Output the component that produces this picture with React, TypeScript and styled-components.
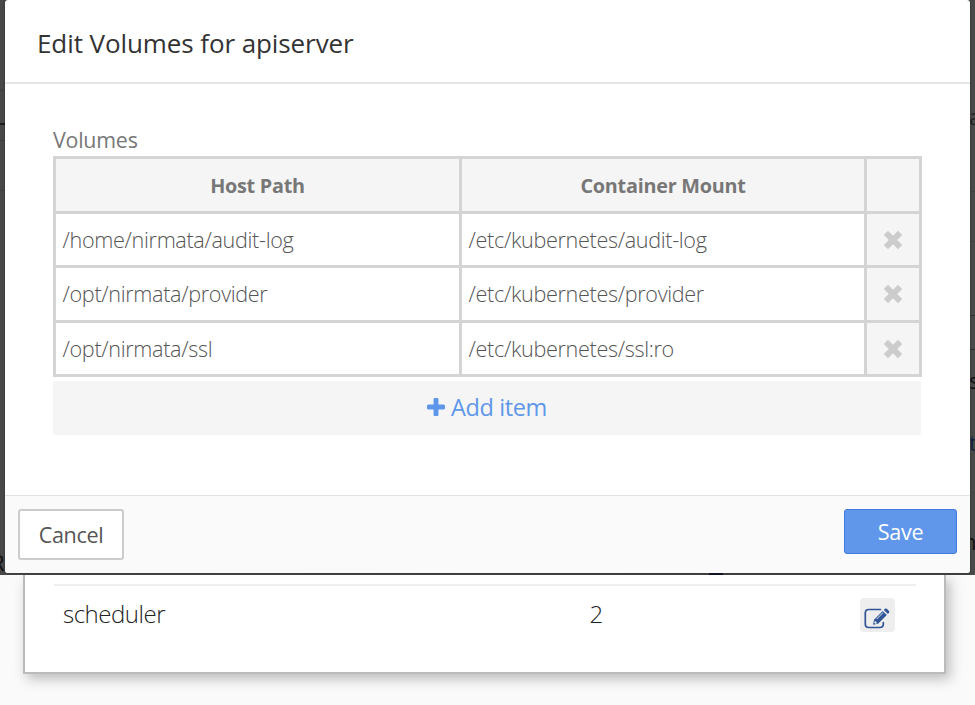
import React from "react";
import styled, { createGlobalStyle } from "styled-components";

const GlobalStyle = createGlobalStyle`
  *, *::before, *::after { box-sizing: border-box; }
  body {
    margin: 0;
    background: #fafafa;
    color: #333;
    font-family: "Open Sans", "Noto Sans", sans-serif;
  }
  button { font: inherit; margin: 0; }
`;

const Page = styled.div`
  width: 975px;
  height: 705px;
  overflow: hidden;
  display: flex;
  flex-direction: column;
`;

const Backdrop = styled.div`
  position: relative;
  z-index: 1;
  flex: none;
  height: 575px;
  padding: 0 5px 2px;
  overflow: hidden;
  background: linear-gradient(90deg, #484848 0, #444 970px, #484a4a 970px);
`;

const Remnant = styled.span<{ $x: number; $y: number; $size?: number; $color?: string }>`
  position: absolute;
  left: ${(p) => p.$x}px;
  top: ${(p) => p.$y}px;
  font-size: ${(p) => p.$size ?? 22}px;
  line-height: 30px;
  color: ${(p) => p.$color ?? "#111"};
`;

const Rule = styled.i<{ $x: number; $y: number; $w?: number; $h?: number; $color?: string }>`
  position: absolute;
  left: ${(p) => p.$x}px;
  top: ${(p) => p.$y}px;
  width: ${(p) => p.$w ?? 5}px;
  height: ${(p) => p.$h ?? 1}px;
  background: ${(p) => p.$color ?? "#3f3f3f"};
`;

const Dialog = styled.section`
  position: relative;
  height: 573px;
  display: flex;
  flex-direction: column;
  background: #fff;
  border-radius: 3px;
  overflow: hidden;
  box-shadow: 0 0 2px #222;
`;

const DialogHeader = styled.header`
  height: 84px;
  flex: none;
  padding: 25px 32px 0;
  border-bottom: 2px solid #e5e5e5;
`;

const Title = styled.h1`
  margin: 0;
  font-size: 26px;
  line-height: 37px;
  font-weight: 400;
  letter-spacing: -0.09px;
  color: #333;
`;

const DialogBody = styled.div`
  flex: 1;
  padding: 40px 48px 0;
`;

const FieldLabel = styled.div`
  height: 32px;
  line-height: 31px;
  font-size: 21.4px;
  letter-spacing: -0.22px;
  color: #777;
`;

const Table = styled.div`
  width: 869px;
  height: 221px;
  display: grid;
  grid-template-columns: 403px 402px 52px;
  grid-template-rows: repeat(4, 1fr);
  gap: 3px;
  padding: 3px;
  background: #d4d4d4;
`;

const HeadCell = styled.div`
  display: flex;
  align-items: center;
  justify-content: center;
  padding-top: 2px;
  background: #f5f5f5;
  font-size: 19.8px;
  font-weight: 700;
  letter-spacing: -0.24px;
  color: #777;
`;

const Cell = styled.div`
  display: flex;
  align-items: center;
  padding: 0 6.5px;
  background: #fff;
  font-size: 21.6px;
  font-weight: 300;
  letter-spacing: -0.33px;
  color: #555;
`;

const RemoveCell = styled.button`
  display: flex;
  align-items: center;
  justify-content: center;
  border: 0;
  padding: 1px 0 0;
  background: #f5f5f5;
  color: #ccc;
`;

const AddBar = styled.button`
  display: flex;
  align-items: center;
  justify-content: center;
  gap: 6px;
  width: 868px;
  height: 54px;
  margin-top: 4px;
  padding: 0 0 2px;
  border: 0;
  border-radius: 2px;
  background: #f5f5f5;
  color: #5e97ea;
  font-size: 23.5px;
  letter-spacing: -0.38px;
`;

const DialogFooter = styled.footer`
  flex: none;
  height: 78px;
  display: flex;
  align-items: flex-start;
  justify-content: space-between;
  padding: 13px 13px 0;
  background: #fafafa;
  border-top: 1px solid #e2e2e2;
`;

const Button = styled.button<{ $primary?: boolean }>`
  width: ${(p) => (p.$primary ? 113 : 106)}px;
  height: ${(p) => (p.$primary ? 45 : 51)}px;
  padding: 0;
  border: ${(p) => (p.$primary ? "1px solid #3f7be0" : "2px solid #ccc")};
  border-radius: 3px;
  background: ${(p) => (p.$primary ? "#6097eb" : "#fff")};
  color: ${(p) => (p.$primary ? "#fff" : "#555")};
  font-size: 21.6px;
  letter-spacing: -0.35px;
`;

const Card = styled.section`
  flex: none;
  width: 923px;
  height: 99px;
  margin-left: 23px;
  padding: 9px 28px 0 29px;
  background: #fff;
  border: 2px solid #bbb;
  border-top: 0;
  box-shadow: 4px 5px 12px rgba(0, 0, 0, 0.25);
`;

const ServiceRow = styled.div`
  display: grid;
  grid-template-columns: 526.5px 270.5px 36px;
  align-items: start;
  padding-left: 9px;
  border-top: 2px solid #eee;
  font-size: 24px;
  font-weight: 300;
  line-height: 34px;
  letter-spacing: -0.48px;
  color: #222;
`;

const RowText = styled.span`
  padding-top: 11px;
`;

const EditButton = styled.button`
  width: 35px;
  height: 34px;
  margin-top: 12px;
  padding: 0;
  display: flex;
  border: 0;
  border-radius: 4px;
  background: #eee;
  color: #2f5597;
`;

const RemoveIcon = () => (
  <svg width="20" height="20" viewBox="0 0 20 20" fill="currentColor">
    <path d="M5 .8 10 5.8 15 .8 19.2 5 14.2 10 19.2 15 15 19.2 10 14.2 5 19.2 .8 15 5.8 10 .8 5Z" />
  </svg>
);

const PlusIcon = () => (
  <svg width="18" height="18" viewBox="192 128 1408 1408" fill="currentColor">
    <path d="M1600 736v192q0 40-28 68t-68 28h-416v416q0 40-28 68t-68 28h-192q-40 0-68-28t-28-68v-416h-416q-40 0-68-28t-28-68v-192q0-40 28-68t68-28h416v-416q0-40 28-68t68-28h192q40 0 68 28t28 68v416h416q40 0 68 28t28 68z" />
  </svg>
);

const EditIcon = () => (
  <svg width="35" height="34" viewBox="0 0 35 34" fill="none">
    <path
      d="M20.5 11.5H8.8Q5.3 11.5 5.3 15V26Q5.3 29.5 8.8 29.5H19.8Q23.3 29.5 23.3 26V24.5"
      stroke="currentColor"
      strokeWidth="1.7"
      strokeLinecap="round"
    />
    <path d="M13 26.8 14 21.7 22.7 13 26.8 17.1 18.1 25.8Z" fill="currentColor" />
    <path d="M23.8 11.9 25 10.8Q25.9 10 26.8 10.8L29 13Q29.8 13.9 29 14.8L27.9 16Z" fill="currentColor" />
    <path d="M16.6 21.2 23.1 14.7" stroke="#a9b9d5" strokeWidth="1.1" />
    <path d="M14.8 22.8 17.3 25.2 15.2 25.8 14.2 24.8Z" fill="#eee" />
  </svg>
);

const volumes = [
  { host: "/home/nirmata/audit-log", mount: "/etc/kubernetes/audit-log" },
  { host: "/opt/nirmata/provider", mount: "/etc/kubernetes/provider" },
  { host: "/opt/nirmata/ssl", mount: "/etc/kubernetes/ssl:ro" },
];

export default function App() {
  return (
    <Page>
      <GlobalStyle />
      <Backdrop>
        <Rule $x={0} $y={90} />
        <Rule $x={0} $y={123} $h={2} $color="#1c1c1c" />
        <Rule $x={0} $y={140} />
        <Rule $x={0} $y={190} />
        <Rule $x={970} $y={191} />
        <Rule $x={970} $y={241} />
        <Rule $x={970} $y={315} $color="#333" />
        <Rule $x={970} $y={349} $color="#2e2e2e" />
        <Remnant $x={-9} $y={547}>R</Remnant>
        <Remnant $x={969} $y={101} $color="#222">a</Remnant>
        <Remnant $x={969} $y={365}>s</Remnant>
        <Remnant $x={969} $y={427} $color="#14233f">t</Remnant>
        <Remnant $x={963} $y={526}>n</Remnant>
        <Rule $x={709} $y={573} $w={14} $h={2} $color="#0b1228" />
        <Dialog>
          <DialogHeader>
            <Title>Edit Volumes for apiserver</Title>
          </DialogHeader>
          <DialogBody>
            <FieldLabel>Volumes</FieldLabel>
            <Table>
              <HeadCell>Host Path</HeadCell>
              <HeadCell>Container Mount</HeadCell>
              <HeadCell />
              {volumes.map((v) => (
                <React.Fragment key={v.host}>
                  <Cell>{v.host}</Cell>
                  <Cell>{v.mount}</Cell>
                  <RemoveCell aria-label="Remove">
                    <RemoveIcon />
                  </RemoveCell>
                </React.Fragment>
              ))}
            </Table>
            <AddBar>
              <PlusIcon />
              <span>Add item</span>
            </AddBar>
          </DialogBody>
          <DialogFooter>
            <Button>Cancel</Button>
            <Button $primary>Save</Button>
          </DialogFooter>
        </Dialog>
      </Backdrop>
      <Card>
        <ServiceRow>
          <RowText>scheduler</RowText>
          <RowText>2</RowText>
          <EditButton aria-label="Edit">
            <EditIcon />
          </EditButton>
        </ServiceRow>
      </Card>
    </Page>
  );
}
